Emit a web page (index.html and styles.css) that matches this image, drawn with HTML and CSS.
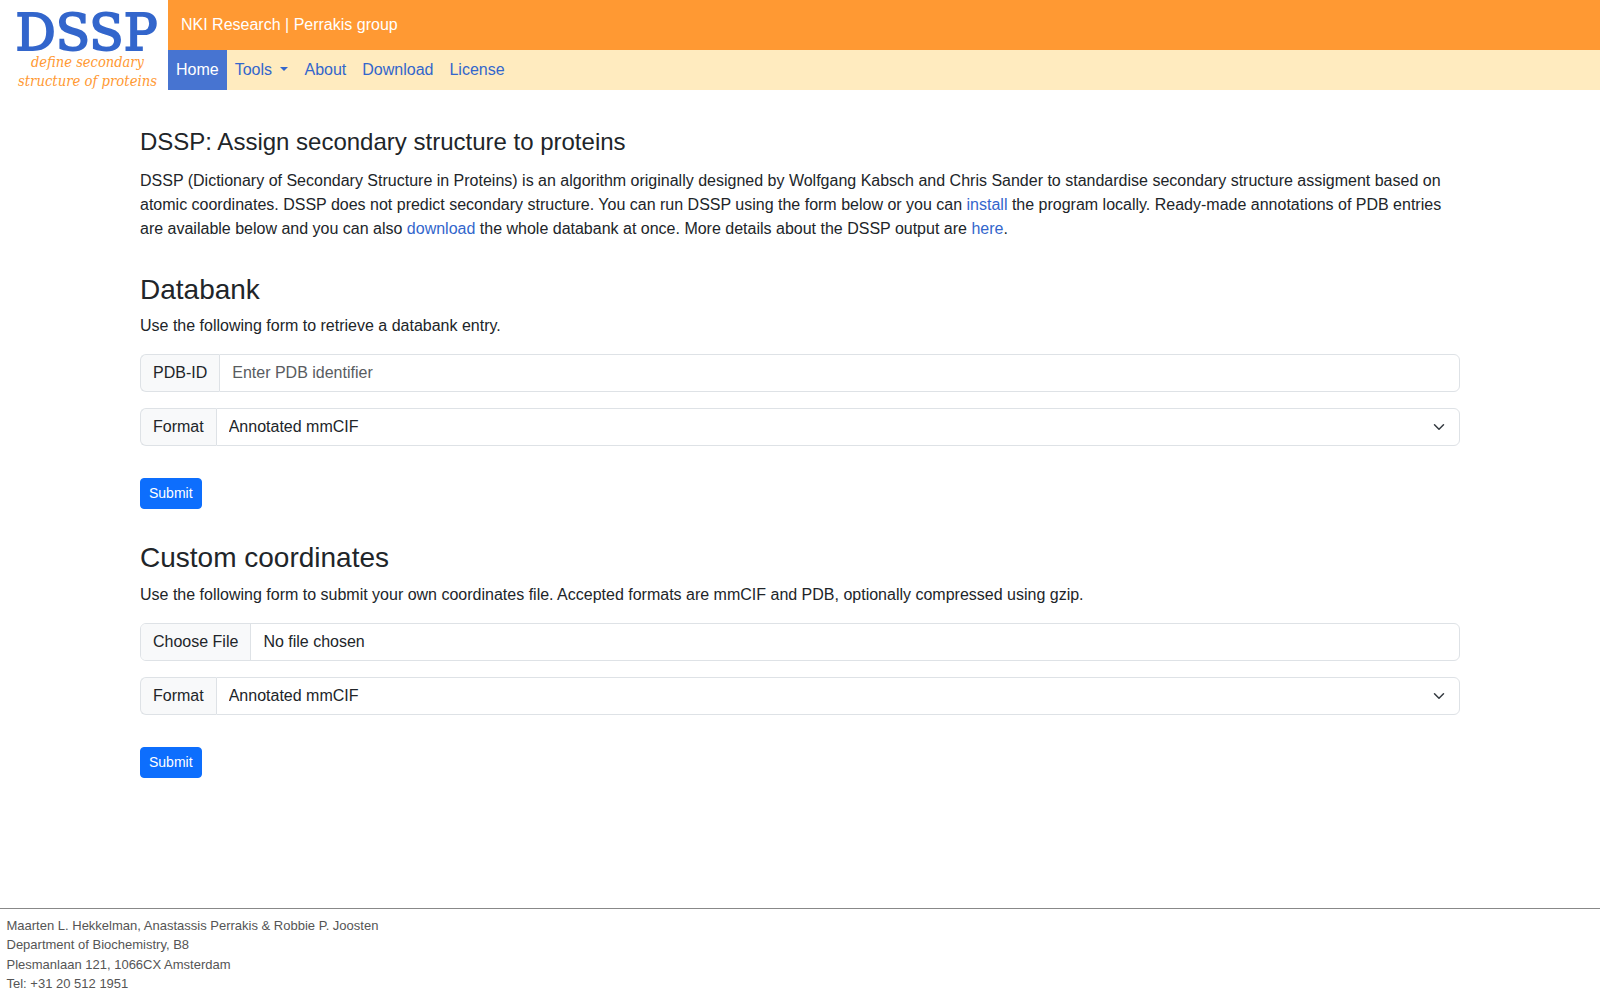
FILE: index.html
```html
<!DOCTYPE html>
<html lang="en">

<head>
    <meta charset="utf-8">
    <meta name="viewport" content="width=device-width, initial-scale=1">
    <title>DSSP</title>
    <link rel="stylesheet" href="styles.css">
</head>

<body>
    <header>
        <a class="logo" href="#">
            <svg width="168" height="92" viewBox="0 0 168 92" role="img" aria-label="DSSP">
                <text class="logo-name" x="15.5" y="50" textLength="142" lengthAdjust="spacingAndGlyphs">DSSP</text>
                <text class="logo-tagline" x="31" y="67" textLength="113" lengthAdjust="spacingAndGlyphs">define secondary</text>
                <text class="logo-tagline" x="18" y="86" textLength="139" lengthAdjust="spacingAndGlyphs">structure of proteins</text>
            </svg>
        </a>
        <div class="bars">
            <div class="brand">NKI Research | Perrakis group</div>
            <nav>
                <a class="nav-link active" href="#">Home</a>
                <a class="nav-link dropdown" href="#">Tools </a>
                <a class="nav-link" href="#">About</a>
                <a class="nav-link" href="#">Download</a>
                <a class="nav-link" href="#">License</a>
            </nav>
        </div>
    </header>

    <main class="container">
        <h4>DSSP: Assign secondary structure to proteins</h4>
        <p>DSSP (Dictionary of Secondary Structure in Proteins) is an algorithm originally designed by Wolfgang Kabsch and Chris Sander to standardise secondary structure assigment based on atomic coordinates. DSSP does not predict secondary structure. You can run DSSP using the form below or you can <a href="#">install</a> the program locally. Ready-made annotations of PDB entries are available below and you can also <a href="#">download</a> the whole databank at once. More details about the DSSP output are <a href="#">here</a>.</p>

        <section>
            <h3>Databank</h3>
            <p>Use the following form to retrieve a databank entry.</p>
            <form>
                <div class="input-group">
                    <label class="input-label" for="pdb-id">PDB-ID</label>
                    <input class="form-control" type="text" id="pdb-id" placeholder="Enter PDB identifier">
                </div>
                <div class="input-group">
                    <label class="input-label" for="format">Format</label>
                    <div class="select">
                        <select class="form-control" id="format">
                            <option>Annotated mmCIF</option>
                            <option>DSSP</option>
                        </select>
                        <svg class="chevron" width="16" height="12" viewBox="0 0 16 16">
                            <path d="m2 5 6 6 6-6" />
                        </svg>
                    </div>
                </div>
                <button class="btn" type="button">Submit</button>
            </form>
        </section>

        <section>
            <h3>Custom coordinates</h3>
            <p>Use the following form to submit your own coordinates file. Accepted formats are mmCIF and PDB, optionally compressed using gzip.</p>
            <form>
                <div class="input-group">
                    <input class="form-control" type="file" id="coordinates">
                </div>
                <div class="input-group">
                    <label class="input-label" for="custom-format">Format</label>
                    <div class="select">
                        <select class="form-control" id="custom-format">
                            <option>Annotated mmCIF</option>
                            <option>DSSP</option>
                        </select>
                        <svg class="chevron" width="16" height="12" viewBox="0 0 16 16">
                            <path d="m2 5 6 6 6-6" />
                        </svg>
                    </div>
                </div>
                <button class="btn" type="button">Submit</button>
            </form>
        </section>
    </main>

    <footer>
        Maarten L. Hekkelman, Anastassis Perrakis &amp; Robbie P. Joosten<br>
        Department of Biochemistry, B8<br>
        Plesmanlaan 121, 1066CX Amsterdam<br>
        Tel: +31 20 512 1951
    </footer>
</body>

</html>
```
FILE: styles.css
```css
* {
    box-sizing: border-box;
}

body {
    margin: 0;
    min-height: 100vh;
    display: flex;
    flex-direction: column;
    font-family: "Liberation Sans", Arial, sans-serif;
    font-size: 16px;
    line-height: 1.5;
    color: #212529;
    background: #fff;
}

a {
    color: #3366cc;
    text-decoration: none;
}

h3,
h4 {
    margin: 0 0 8px;
    font-weight: 500;
    line-height: 1.2;
}

h3 {
    font-size: 28px;
}

h4 {
    font-size: 24px;
}

p {
    margin: 0 0 16px;
}

/* header */
header {
    display: flex;
    height: 92px;
}

.logo {
    width: 168px;
}

.logo svg {
    display: block;
}

.logo-name {
    font-family: "DejaVu Serif", serif;
    font-size: 51px;
    fill: #3366cc;
    stroke: #3366cc;
    stroke-width: 2px;
}

.logo-tagline {
    font-family: "DejaVu Serif Condensed", "DejaVu Serif", serif;
    font-size: 15px;
    font-style: italic;
    fill: #ff9933;
}

.bars {
    flex: 1;
}

.brand {
    height: 50px;
    padding: 13px;
    color: #fff;
    background: #ff9933;
}

nav {
    display: flex;
    height: 40px;
    background: #ffebbf;
}

.nav-link {
    padding: 8px;
}

.nav-link.active {
    color: #fff;
    background: #4774d1;
}

.dropdown::after {
    content: "";
    display: inline-block;
    margin-left: 4px;
    vertical-align: 4px;
    border-top: 4.8px solid;
    border-left: 4.8px solid transparent;
    border-right: 4.8px solid transparent;
}

/* content */
.container {
    flex: 1;
    width: 1344px;
    max-width: 100%;
    margin: 0 auto;
    padding: 36px 12px 0;
}

.container > h4 {
    margin-bottom: 12px;
}

section {
    margin-top: 32px;
}

.input-group {
    display: flex;
    height: 38px;
    margin-bottom: 16px;
}

.input-label {
    padding: 6px 12px;
    border: 1px solid #dee2e6;
    border-right: 0;
    border-radius: 6px 0 0 6px;
    background: #f8f9fa;
}

.form-control {
    flex: 1;
    width: 100%;
    height: 38px;
    margin: 0;
    padding: 6px 12px;
    border: 1px solid #dee2e6;
    border-radius: 6px;
    font: inherit;
    color: #212529;
    background: #fff;
    appearance: none;
}

.input-label + .form-control,
.select .form-control {
    border-radius: 0 6px 6px 0;
}

.form-control::placeholder {
    color: #595c5f;
    opacity: 1;
}

.form-control::file-selector-button {
    margin: -6px 12px -6px -12px;
    padding: 6px 12px;
    border: 0 solid #dee2e6;
    border-right-width: 1px;
    font: inherit;
    color: #212529;
    background: #f8f9fa;
}

.select {
    position: relative;
    flex: 1;
}

.chevron {
    position: absolute;
    top: 13px;
    right: 13px;
    pointer-events: none;
    fill: none;
    stroke: #343a40;
    stroke-width: 2;
    stroke-linecap: round;
    stroke-linejoin: round;
}

.btn {
    display: block;
    height: 31px;
    margin-top: 32px;
    padding: 4px 8px;
    border: 1px solid #0d6efd;
    border-radius: 4px;
    font: inherit;
    font-size: 14px;
    color: #fff;
    background: #0d6efd;
}

/* footer */
footer {
    padding: 6.5px 6.5px;
    border-top: 1px solid #888;
    font-size: 13px;
    color: #555;
}
```
